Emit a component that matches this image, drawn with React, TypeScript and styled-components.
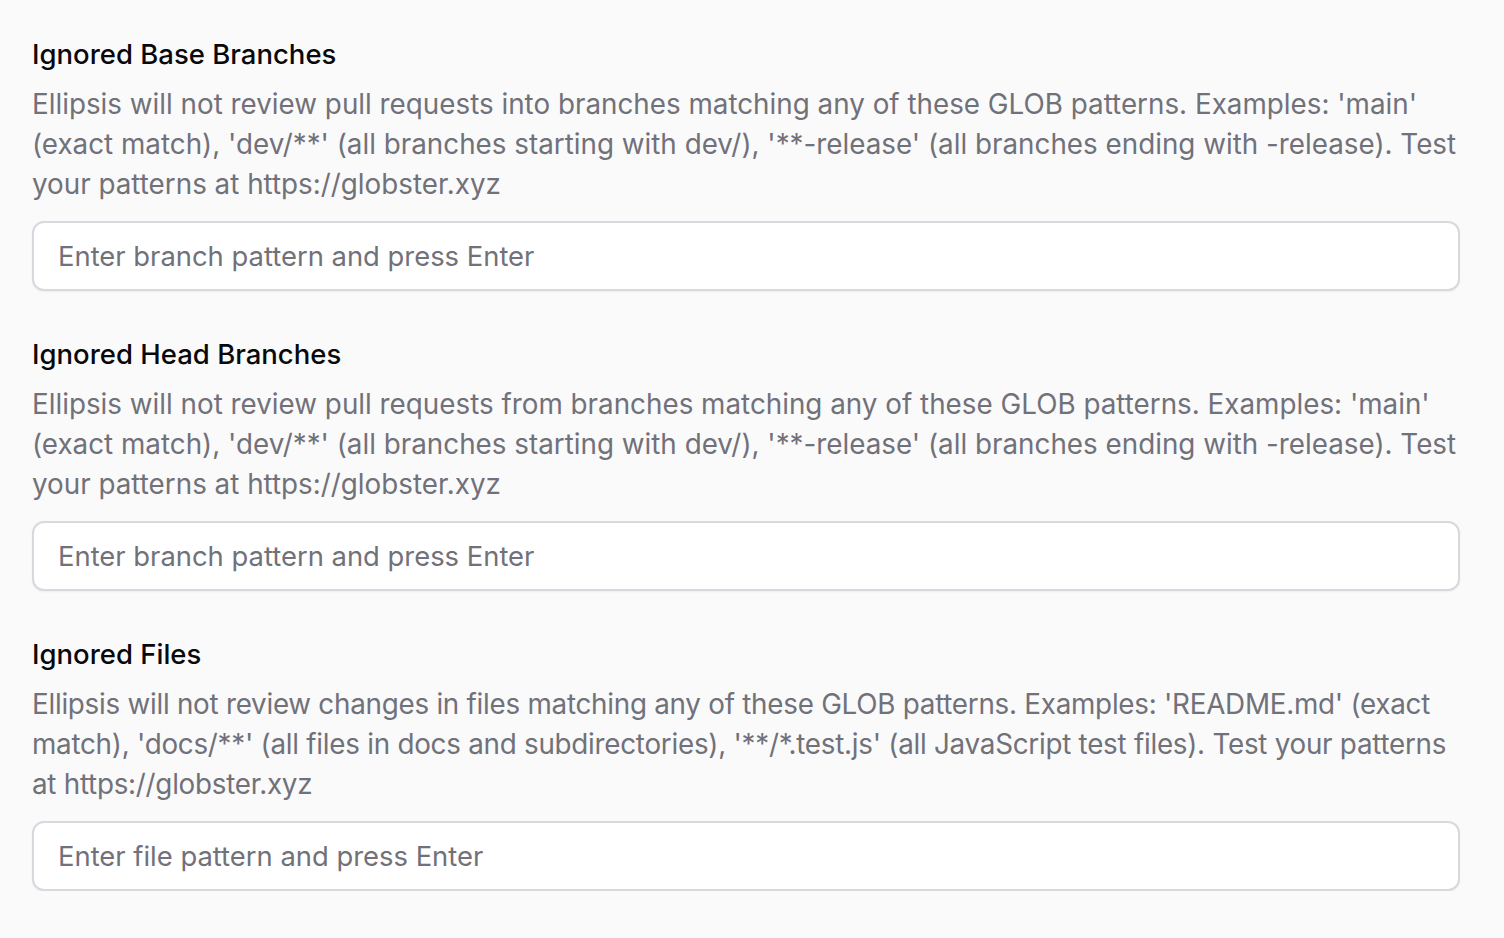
import styled, { createGlobalStyle } from "styled-components"

const GlobalStyle = createGlobalStyle`
  html, body {
    margin: 0;
    padding: 0;
    background: #fafafa;
  }
  body {
    font-family: Inter, "Noto Sans", sans-serif;
    -webkit-font-smoothing: antialiased;
  }
`;

const sections = [
  {
    title: "Ignored Base Branches",
    text: "Ellipsis will not review pull requests into branches matching any of these GLOB patterns. Examples: 'main' (exact match), 'dev/**' (all branches starting with dev/), '**-release' (all branches ending with -release). Test your patterns at https://globster.xyz",
    placeholder: "Enter branch pattern and press Enter",
    tracking: 0,
  },
  {
    title: "Ignored Head Branches",
    text: "Ellipsis will not review pull requests from branches matching any of these GLOB patterns. Examples: 'main' (exact match), 'dev/**' (all branches starting with dev/), '**-release' (all branches ending with -release). Test your patterns at https://globster.xyz",
    placeholder: "Enter branch pattern and press Enter",
    tracking: 0,
  },
  {
    title: "Ignored Files",
    text: "Ellipsis will not review changes in files matching any of these GLOB patterns. Examples: 'README.md' (exact match), 'docs/**' (all files in docs and subdirectories), '**/*.test.js' (all JavaScript test files). Test your patterns at https://globster.xyz",
    placeholder: "Enter file pattern and press Enter",
    tracking: -0.26,
  },
];

export default function App() {
  return (
    <>
      <GlobalStyle />
      <Page>
        {sections.map((s) => (
          <Section key={s.title}>
            <Title>{s.title}</Title>
            <Description $tracking={s.tracking}>{s.text}</Description>
            <PatternInput type="text" placeholder={s.placeholder} />
          </Section>
        ))}
      </Page>
    </>
  )
}

const Page = styled.div`
  display: flex;
  flex-direction: column;
  gap: 43px;
  padding: 34px 44px 0 32px;
`;

const Section = styled.div`
  display: flex;
  flex-direction: column;
`;

const Title = styled.div`
  font-size: 27.5px;
  line-height: 40px;
  font-weight: 500;
  color: #09090b;
`;

const Description = styled.div<{ $tracking: number }>`
  font-size: 27.8px;
  line-height: 40px;
  letter-spacing: ${(p) => p.$tracking}px;
  color: #71717a;
  margin-top: 10px;
  margin-bottom: 17px;
`;

const PatternInput = styled.input`
  box-sizing: border-box;
  width: 100%;
  height: 70px;
  padding: 0 24px;
  border: 2px solid #d8d8de;
  border-radius: 12px;
  background: #fff;
  box-shadow: 0 1px 2px rgba(0, 0, 0, 0.05);
  font-family: Inter, "Noto Sans", sans-serif;
  font-size: 27.4px;
  color: #09090b;
  outline: none;

  &::placeholder {
    color: #71717a;
  }
`;
